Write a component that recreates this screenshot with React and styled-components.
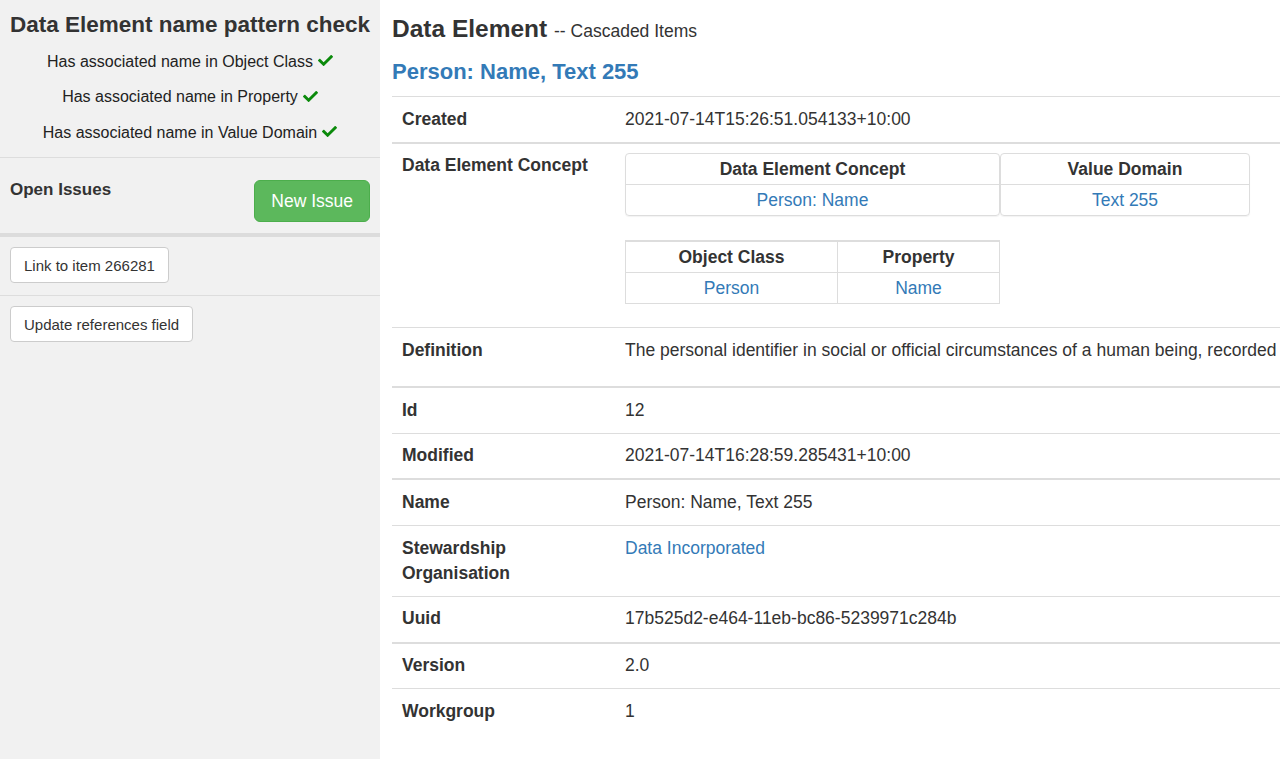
import React from "react";
import styled, { createGlobalStyle } from "styled-components";
import { FaCheck } from "react-icons/fa";

const GlobalStyle = createGlobalStyle`
  html, body {
    margin: 0;
    padding: 0;
    overflow: hidden;
  }
  body {
    font-family: "Liberation Sans", Arial, Helvetica, sans-serif;
    color: #333;
    background: #fff;
  }
`;

const Page = styled.div`
  display: flex;
  width: 1280px;
  height: 759px;
`;

const Sidebar = styled.aside`
  width: 380px;
  flex-shrink: 0;
  background: #f1f1f1;
  display: flex;
  flex-direction: column;
`;

const SidebarTitle = styled.h3`
  margin: 0;
  padding-top: 12px;
  font-size: 22.5px;
  line-height: 26px;
  font-weight: bold;
  text-align: center;
  white-space: nowrap;
`;

const CheckSection = styled.div`
  padding: 6px 0 6.5px;
  border-bottom: 1px solid #ddd;
`;

const CheckLine = styled.div`
  height: 35.5px;
  display: flex;
  align-items: center;
  justify-content: center;
  gap: 5px;
  font-size: 16px;
  color: #222;

  svg {
    color: #0b8a0b;
    margin-top: -2px;
  }
`;

const IssuesSection = styled.div`
  display: flex;
  justify-content: space-between;
  align-items: flex-start;
  padding: 22px 10px 11px;
  border-bottom: 4px solid #dcdcdc;
`;

const IssuesHeading = styled.h4`
  margin: 0;
  font-size: 17px;
  line-height: 20px;
  font-weight: bold;
`;

const SuccessButton = styled.button`
  height: 42px;
  padding: 0 16px;
  background: #5cb85c;
  border: 1px solid #4cae4c;
  border-radius: 6px;
  color: #fff;
  font-family: inherit;
  font-size: 17.5px;
  cursor: pointer;
`;

const ActionSection = styled.div`
  padding: 10px 10px ${(p) => p.$bottom || "10px"};
  border-bottom: ${(p) => (p.$divider ? "1px solid #ddd" : "none")};
`;

const DefaultButton = styled.button`
  height: 36px;
  padding: 0 13px;
  background: #fff;
  border: 1px solid #ccc;
  border-radius: 4px;
  color: #333;
  font-family: inherit;
  font-size: 15px;
  cursor: pointer;
`;

const Main = styled.main`
  flex: 1;
  overflow: hidden;
  padding-left: 12px;
`;

const Title = styled.h1`
  margin: 15px 0 0;
  font-size: 24.5px;
  line-height: 27px;
  font-weight: bold;
  white-space: nowrap;

  small {
    font-size: 17.5px;
    font-weight: normal;
    color: #333;
  }
`;

const Subtitle = styled.h2`
  margin: 15px 0 12px;
  font-size: 22px;
  line-height: 24px;
  font-weight: bold;
  color: #337ab7;
`;

const DetailTable = styled.table`
  width: 1000px;
  border-collapse: separate;
  border-spacing: 0;
  font-size: 17.5px;
  line-height: 25px;
  white-space: nowrap;
`;

const Cell = styled.td`
  padding: 9.5px 10px 10.2px;
  vertical-align: top;
  border-top: ${(p) => p.$top || 1}px solid #ddd;
  text-align: left;
`;

const Label = styled(Cell).attrs({ as: "th" })`
  width: 203px;
  font-weight: bold;
  white-space: normal;
`;

const Link = styled.a`
  color: #337ab7;
  text-decoration: none;
`;

const Para = styled.p`
  margin: 0 0 13px;
`;

const PanelRow = styled.div`
  display: flex;
  margin: 0 0 24px;
`;

const Panel = styled.table`
  width: ${(p) => p.$width}px;
  border: 1px solid #ddd;
  border-radius: 4px;
  border-spacing: 0;
  box-shadow: 0 1px 1px rgba(0, 0, 0, 0.05);
  line-height: 24px;
  text-align: center;
`;

const PanelHead = styled.th`
  padding: 3px 8px;
  font-weight: bold;
  border-bottom: 1px solid #ddd;
`;

const PanelCell = styled.td`
  padding: 3px 8px;
`;

const GridTable = styled.table`
  width: 375px;
  border-collapse: collapse;
  border-top: 2px solid #ddd;
  margin-bottom: 13px;
  line-height: 24px;
  text-align: center;

  th,
  td {
    border: 1px solid #ddd;
    padding: 3px 8px;
  }
  th {
    font-weight: bold;
    border-top: none;
  }
`;

const checks = [
  "Has associated name in Object Class",
  "Has associated name in Property",
  "Has associated name in Value Domain",
];

const simpleRows = [
  { label: "Id", value: "12", top: 2 },
  { label: "Modified", value: "2021-07-14T16:28:59.285431+10:00", top: 1 },
  { label: "Name", value: "Person: Name, Text 255", top: 2 },
];

const tailRows = [
  { label: "Uuid", value: "17b525d2-e464-11eb-bc86-5239971c284b", top: 1 },
  { label: "Version", value: "2.0", top: 2 },
  { label: "Workgroup", value: "1", top: 1 },
];

export default function App() {
  return (
    <>
      <GlobalStyle />
      <Page>
        <Sidebar>
          <SidebarTitle>Data Element name pattern check</SidebarTitle>
          <CheckSection>
            {checks.map((c) => (
              <CheckLine key={c}>
                {c} <FaCheck size={15} />
              </CheckLine>
            ))}
          </CheckSection>
          <IssuesSection>
            <IssuesHeading>Open Issues</IssuesHeading>
            <SuccessButton>New Issue</SuccessButton>
          </IssuesSection>
          <ActionSection $divider $bottom="12px">
            <DefaultButton>Link to item 266281</DefaultButton>
          </ActionSection>
          <ActionSection>
            <DefaultButton>Update references field</DefaultButton>
          </ActionSection>
        </Sidebar>

        <Main>
          <Title>
            Data Element <small>-- Cascaded Items</small>
          </Title>
          <Subtitle>Person: Name, Text 255</Subtitle>
          <DetailTable>
            <tbody>
              <tr>
                <Label>Created</Label>
                <Cell>2021-07-14T15:26:51.054133+10:00</Cell>
              </tr>
              <tr>
                <Label $top={2}>Data Element Concept</Label>
                <Cell $top={2}>
                  <PanelRow>
                    <Panel $width={375}>
                      <thead>
                        <tr>
                          <PanelHead>Data Element Concept</PanelHead>
                        </tr>
                      </thead>
                      <tbody>
                        <tr>
                          <PanelCell>
                            <Link href="#">Person: Name</Link>
                          </PanelCell>
                        </tr>
                      </tbody>
                    </Panel>
                    <Panel $width={250}>
                      <thead>
                        <tr>
                          <PanelHead>Value Domain</PanelHead>
                        </tr>
                      </thead>
                      <tbody>
                        <tr>
                          <PanelCell>
                            <Link href="#">Text 255</Link>
                          </PanelCell>
                        </tr>
                      </tbody>
                    </Panel>
                  </PanelRow>
                  <GridTable>
                    <thead>
                      <tr>
                        <th style={{ width: 195 }}>Object Class</th>
                        <th>Property</th>
                      </tr>
                    </thead>
                    <tbody>
                      <tr>
                        <td>
                          <Link href="#">Person</Link>
                        </td>
                        <td>
                          <Link href="#">Name</Link>
                        </td>
                      </tr>
                    </tbody>
                  </GridTable>
                </Cell>
              </tr>
              <tr>
                <Label>Definition</Label>
                <Cell>
                  <Para>
                    The personal identifier in social or official circumstances of a human being, recorded
                  </Para>
                </Cell>
              </tr>
              {simpleRows.map((r) => (
                <tr key={r.label}>
                  <Label $top={r.top}>{r.label}</Label>
                  <Cell $top={r.top}>{r.value}</Cell>
                </tr>
              ))}
              <tr>
                <Label>
                  Stewardship
                  <br />
                  Organisation
                </Label>
                <Cell>
                  <Link href="#">Data Incorporated</Link>
                </Cell>
              </tr>
              {tailRows.map((r) => (
                <tr key={r.label}>
                  <Label $top={r.top}>{r.label}</Label>
                  <Cell $top={r.top}>{r.value}</Cell>
                </tr>
              ))}
            </tbody>
          </DetailTable>
        </Main>
      </Page>
    </>
  );
}
